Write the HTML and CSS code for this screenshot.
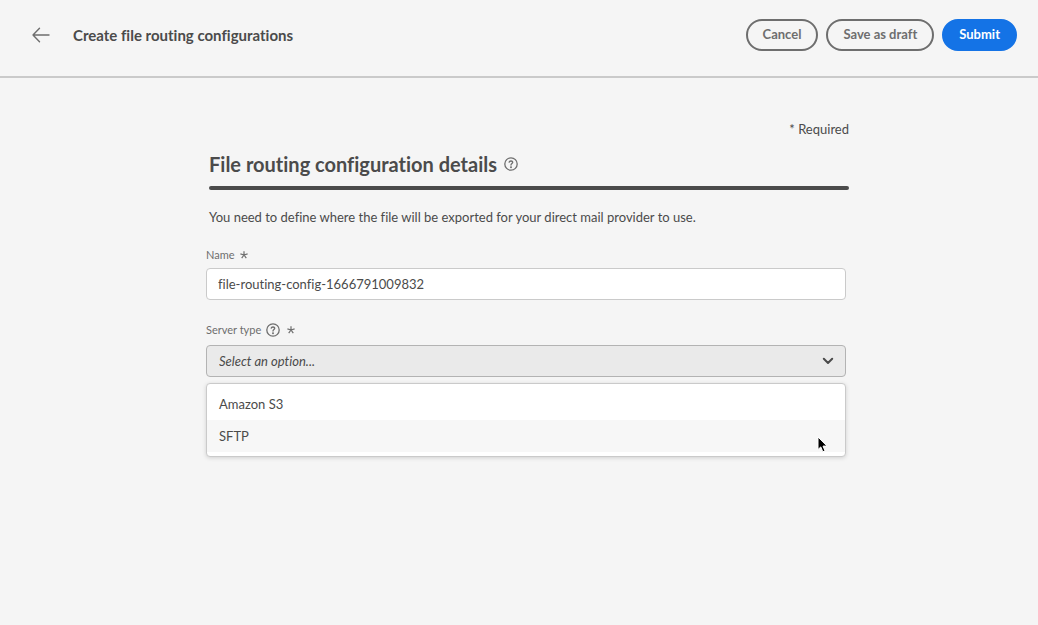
FILE: index.html
```html
<!DOCTYPE html>
<html lang="en">
<head>
<meta charset="utf-8">
<meta name="viewport" content="width=device-width, initial-scale=1">
<title>Create file routing configurations</title>
<link rel="stylesheet" href="styles.css">
</head>
<body>
<header class="topbar">
  <button class="back" type="button" aria-label="Back">
    <svg width="18" height="16" viewBox="0 0 18 16" fill="none" stroke="#6e6e6e" stroke-width="1.4" stroke-linecap="round" stroke-linejoin="round" aria-hidden="true"><path d="M17 8H1M7.500 1.200 1 8l6.500 6.800"/></svg>
  </button>
  <h1 class="topbar-title">Create file routing configurations</h1>
  <div class="actions">
    <button class="btn" type="button">Cancel</button>
    <button class="btn" type="button">Save as draft</button>
    <button class="btn btn-primary" type="submit" form="routing">Submit</button>
  </div>
</header>
<main class="main">
  <form class="form" id="routing">
    <p class="required">* Required</p>
    <div class="heading">
      <h2 class="heading-title">File routing configuration details</h2>
      <svg class="help" width="14" height="14" viewBox="0 0 14 14" fill="none" stroke="#6e6e6e" stroke-width="1.3" stroke-linecap="round" aria-hidden="true"><circle cx="7" cy="7" r="6.200"/><path d="M5.200 5.200C5.500 3.500 8.800 3.600 8.700 5.400 8.600 6.600 7 6.600 7 8.100"/><circle cx="7" cy="10.200" r=".4"/></svg>
    </div>
    <p class="intro">You need to define where the file will be exported for your direct mail provider to use.</p>
    <div class="field">
      <label class="label" for="name">Name
        <svg class="star" width="8" height="8" viewBox="0 0 8 8" fill="none" stroke="#6e6e6e" stroke-width="1.2" aria-hidden="true"><path d="M4 4V.3M4 4l3.600-1.100M4 4l2.300 3.200M4 4 1.700 7.200M4 4 .4 2.900"/></svg>
      </label>
      <input class="input" id="name" type="text" value="file-routing-config-1666791009832">
    </div>
    <div class="field field-server">
      <label class="label" for="server">Server type
        <svg class="help-small" width="14" height="14" viewBox="0 0 14 14" fill="none" stroke="#6e6e6e" stroke-width="1.3" stroke-linecap="round" aria-hidden="true"><circle cx="7" cy="7" r="6.200"/><path d="M5.200 5.200C5.500 3.500 8.800 3.600 8.700 5.400 8.600 6.600 7 6.600 7 8.100"/><circle cx="7" cy="10.200" r=".4"/></svg>
        <svg class="star" width="8" height="8" viewBox="0 0 8 8" fill="none" stroke="#6e6e6e" stroke-width="1.2" aria-hidden="true"><path d="M4 4V.3M4 4l3.600-1.100M4 4l2.300 3.200M4 4 1.700 7.200M4 4 .4 2.900"/></svg>
      </label>
      <div class="picker">
        <select class="input select" id="server">
          <option value="">Select an option...</option>
          <option>Amazon S3</option>
          <option>SFTP</option>
        </select>
        <svg class="chevron" width="12" height="8" viewBox="0 0 12 8" fill="none" stroke="#4b4b4b" stroke-width="2" stroke-linecap="round" stroke-linejoin="round" aria-hidden="true"><path d="m1.800 1.800 4.200 4.200 4.200-4.200"/></svg>
        <ul class="menu" role="listbox" aria-label="Server type">
          <li class="menu-item" role="option" aria-selected="false">Amazon S3</li>
          <li class="menu-item is-active" role="option" aria-selected="false">SFTP
            <svg class="cursor" width="11" height="17" viewBox="0 0 11 17" fill="#000" stroke="#fff" stroke-width="1" stroke-linejoin="round" aria-hidden="true"><path d="M1 1v12.500l2.800-2.600 2 4.900 2.200-1-2-4.700H10z"/></svg>
          </li>
        </ul>
      </div>
    </div>
  </form>
</main>
</body>
</html>
```
FILE: styles.css
```css
* { box-sizing: border-box; }

body {
  min-height: 100vh;
  margin: 0;
  background: #f5f5f5;
  color: #4b4b4b;
  font-family: Lato, "Noto Sans", sans-serif;
  font-size: 13px;
  line-height: 20px;
  font-variant-ligatures: none;
}

h1, h2, p, ul { margin: 0; padding: 0; }

.topbar {
  display: flex;
  align-items: center;
  padding: 19px 21px 25px 32px;
  border-bottom: 2px solid #cacaca;
}

.back {
  display: flex;
  padding: 0;
  border: 0;
  background: none;
}

.topbar-title {
  margin-left: 23px;
  font-size: 15px;
  line-height: 20px;
  font-weight: 700;
}

.actions {
  display: flex;
  gap: 8px;
  margin-left: auto;
}

.btn {
  height: 32px;
  padding: 0 15px 2px;
  border: 2px solid #6e6e6e;
  border-radius: 16px;
  background: none;
  color: #6e6e6e;
  font: 700 13px/20px Lato, "Noto Sans", sans-serif;
  font-variant-ligatures: none;
}

.btn-primary {
  border-color: #1473e6;
  background: #1473e6;
  color: #fff;
}

.main { padding: 41px 0 40px 17px; }

.form {
  max-width: 643px;
  margin: 0 auto;
}

.required { text-align: right; }

.heading {
  display: flex;
  align-items: center;
  gap: 7px;
  margin-left: 3px;
  padding-top: 11px;
}

.heading-title {
  font-size: 20px;
  line-height: 28px;
  font-weight: 700;
}

.intro { margin: 8px 0 0 3px; }

.intro::before {
  content: "";
  display: block;
  height: 4px;
  margin-bottom: 17px;
  border-radius: 2px;
  background: #4b4b4b;
}

.field { margin: 18px 3px 0 0; }

.field-server { margin-top: 20px; }

.label {
  display: flex;
  align-items: center;
  gap: 5px;
  height: 20px;
  margin-bottom: 3px;
  color: #6e6e6e;
  font-size: 11px;
}

.field-server .label { margin-bottom: 5px; }

.help-small + .star { margin-left: 2px; }

.input {
  display: block;
  width: 100%;
  height: 32px;
  padding: 0 11px;
  border: 1px solid #cacaca;
  border-radius: 4px;
  background: #fff;
  color: #4b4b4b;
  font: 13px/20px Lato, "Noto Sans", sans-serif;
  font-variant-ligatures: none;
}

.select {
  appearance: none;
  padding: 0 12px;
  border-color: #b3b3b3;
  background: #eaeaea;
  font-style: italic;
}

.picker { position: relative; }

.chevron {
  position: absolute;
  top: 12px;
  right: 12px;
  pointer-events: none;
}

.menu {
  position: absolute;
  top: 38px;
  left: 0;
  width: 100%;
  padding: 4px 0;
  border: 1px solid #cacaca;
  border-radius: 4px;
  background: #fff;
  box-shadow: 0 1px 4px rgba(0, 0, 0, 0.15);
  list-style: none;
}

.menu-item {
  position: relative;
  padding: 6px 12px;
}

.is-active { background: #f7f7f7; }

.cursor {
  position: absolute;
  top: 16px;
  right: 17px;
}
```
